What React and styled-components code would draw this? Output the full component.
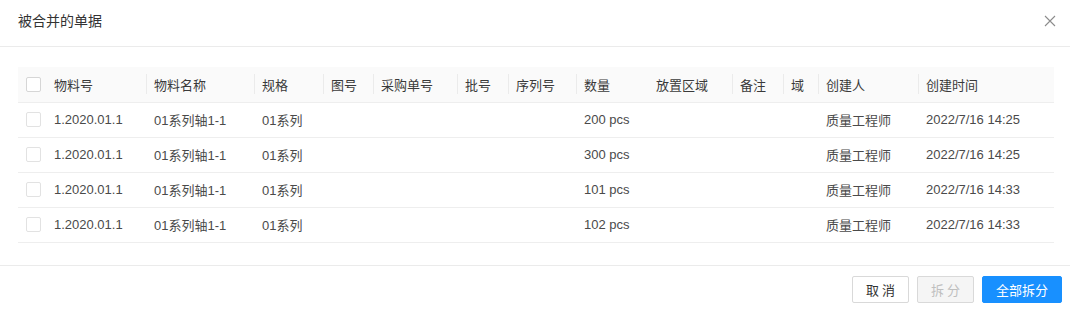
import React from "react";
import styled, { createGlobalStyle } from "styled-components";

const Global = createGlobalStyle`
  html, body { margin: 0; padding: 0; background: #fff; }
  body { font-family: "Liberation Sans", "Noto Sans CJK SC", sans-serif; }
  * { box-sizing: border-box; }
`;

const Modal = styled.div`
  width: 1070px;
  height: 310px;
  background: #fff;
  display: flex;
  flex-direction: column;
`;

const Header = styled.div`
  height: 47px;
  padding: 0 18px 4px;
  display: flex;
  align-items: center;
  justify-content: space-between;
  border-bottom: 1px solid #ebebeb;
`;

const Title = styled.div`
  font-size: 14px;
  line-height: 22px;
  color: #333;
`;

const Close = styled.button`
  border: 0;
  background: transparent;
  padding: 0;
  width: 14px;
  height: 14px;
  margin-right: -5px;
  display: flex;
  align-items: center;
  justify-content: center;
  cursor: pointer;
`;

const Body = styled.div`
  padding: 20px 16px 22px 18px;
`;

const Table = styled.table`
  width: 1036px;
  border-collapse: collapse;
  table-layout: fixed;
  font-size: 13px;
`;

const Th = styled.th`
  position: relative;
  height: 35px;
  padding: 0 8px;
  background: #fafafa;
  font-weight: normal;
  text-align: left;
  color: #3a3a3a;
  border-bottom: 1px solid #eeeeee;
  white-space: nowrap;
  &::before {
    content: "";
    display: ${(p) => (p.$sep ? "block" : "none")};
    position: absolute;
    left: 0;
    top: 50%;
    width: 1px;
    height: 20px;
    transform: translateY(-50%);
    background: #ebebeb;
  }
`;

const Td = styled.td`
  height: 35px;
  padding: 0 8px;
  color: #4a4a4a;
  border-bottom: 1px solid #eeeeee;
  white-space: nowrap;
  overflow: hidden;
`;

const CheckCell = styled.td`
  height: 35px;
  padding: 0 0 0 8px;
  border-bottom: 1px solid #eeeeee;
  background: ${(p) => (p.$head ? "#fafafa" : "#fff")};
`;

const Box = styled.span`
  display: block;
  width: 15px;
  height: 15px;
  border: 1px solid ${(p) => (p.$light ? "#e2e2e2" : "#d6d6d6")};
  border-radius: 2px;
  background: #fff;
`;

const Footer = styled.div`
  border-top: 1px solid #ebebeb;
  padding: 10px 8px 0 0;
  display: flex;
  justify-content: flex-end;
  gap: 8px;
`;

const Button = styled.button`
  height: 27px;
  padding: ${(p) => (p.$spaced ? "0 10px 0 13px" : "0 13px")};
  font-family: inherit;
  font-size: 13px;
  border-radius: 2px;
  letter-spacing: ${(p) => (p.$spaced ? "3px" : "0")};
  border: 1px solid
    ${(p) => (p.$kind === "primary" ? "#1890ff" : "#d9d9d9")};
  background: ${(p) =>
    p.$kind === "primary" ? "#1890ff" : p.$kind === "disabled" ? "#f5f5f5" : "#fff"};
  color: ${(p) =>
    p.$kind === "primary" ? "#fff" : p.$kind === "disabled" ? "#bfbfbf" : "#333"};
  cursor: ${(p) => (p.$kind === "disabled" ? "not-allowed" : "pointer")};
  white-space: nowrap;
`;

const columns = [
  { title: "物料号", w: 100, key: "code" },
  { title: "物料名称", w: 108, key: "name", sep: true },
  { title: "规格", w: 69, key: "spec", sep: true },
  { title: "图号", w: 50, key: "drawing", sep: true },
  { title: "采购单号", w: 84, key: "po", sep: true },
  { title: "批号", w: 51, key: "batch", sep: true },
  { title: "序列号", w: 68, key: "serial", sep: true },
  { title: "数量", w: 72, key: "qty", sep: true },
  { title: "放置区域", w: 84, key: "area" },
  { title: "备注", w: 51, key: "remark", sep: true },
  { title: "域", w: 35, key: "domain", sep: true },
  { title: "创建人", w: 100, key: "creator", sep: true },
  { title: "创建时间", w: 136, key: "time", sep: true },
];

const rows = [
  { qty: "200 pcs", time: "2022/7/16 14:25" },
  { qty: "300 pcs", time: "2022/7/16 14:25" },
  { qty: "101 pcs", time: "2022/7/16 14:33" },
  { qty: "102 pcs", time: "2022/7/16 14:33" },
].map((r) => ({
  code: "1.2020.01.1",
  name: "01系列轴1-1",
  spec: "01系列",
  creator: "质量工程师",
  ...r,
}));

export default function App() {
  return (
    <>
      <Global />
      <Modal>
        <Header>
          <Title>被合并的单据</Title>
          <Close aria-label="close">
            <svg width="12" height="12" viewBox="0 0 12 12">
              <path d="M1 1L11 11M11 1L1 11" stroke="#8c8c8c" strokeWidth="1.1" fill="none" />
            </svg>
          </Close>
        </Header>
        <Body>
          <Table>
            <colgroup>
              <col style={{ width: 28 }} />
              {columns.map((c) => (
                <col key={c.key} style={{ width: c.w }} />
              ))}
            </colgroup>
            <thead>
              <tr>
                <CheckCell as="th" $head>
                  <Box />
                </CheckCell>
                {columns.map((c) => (
                  <Th key={c.key} $sep={c.sep}>
                    {c.title}
                  </Th>
                ))}
              </tr>
            </thead>
            <tbody>
              {rows.map((r, i) => (
                <tr key={i}>
                  <CheckCell>
                    <Box $light />
                  </CheckCell>
                  {columns.map((c) => (
                    <Td key={c.key}>{r[c.key] || ""}</Td>
                  ))}
                </tr>
              ))}
            </tbody>
          </Table>
        </Body>
        <Footer>
          <Button $spaced>取消</Button>
          <Button $spaced $kind="disabled">拆分</Button>
          <Button $kind="primary">全部拆分</Button>
        </Footer>
      </Modal>
    </>
  );
}
